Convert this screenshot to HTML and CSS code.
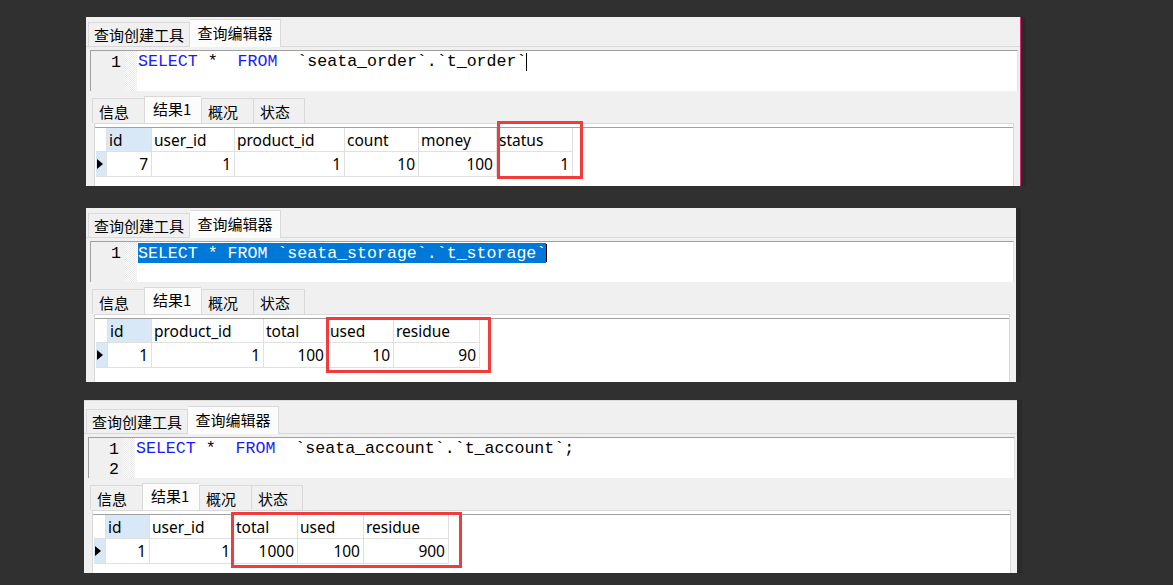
FILE: index.html
```html
<!DOCTYPE html>
<html lang="zh-CN">
<head>
<meta charset="utf-8">
<title>Seata 查询结果</title>
<link rel="stylesheet" href="styles.css">
</head>
<body>
<main class="page">

  <section class="panel p1">
    <div class="tabbar">
      <div class="tab">查询创建工具</div>
      <div class="tab active">查询编辑器</div>
    </div>
    <div class="editor">
      <div class="gutter"><div class="ln">1</div></div>
      <div class="dots"></div>
      <div class="code">
        <div class="line"><span class="kw">SELECT</span> *  <span class="kw">FROM</span>  `seata_order`.`t_order`<span class="caret"></span></div>
      </div>
    </div>
    <div class="rtabs">
      <div class="rtab">信息</div>
      <div class="rtab active">结果1</div>
      <div class="rtab">概况</div>
      <div class="rtab">状态</div>
    </div>
    <div class="frame">
      <div class="grid g1">
        <div class="c ind"></div><div class="c h sel">id</div><div class="c h">user_id</div><div class="c h">product_id</div><div class="c h">count</div><div class="c h">money</div><div class="c h">status</div>
        <div class="c ind cur"><span class="tri"></span></div><div class="c d">7</div><div class="c d">1</div><div class="c d">1</div><div class="c d">10</div><div class="c d">100</div><div class="c d">1</div>
      </div>
    </div>
    <div class="mark m1"></div>
  </section>

  <section class="panel p2">
    <div class="tabbar">
      <div class="tab">查询创建工具</div>
      <div class="tab active">查询编辑器</div>
    </div>
    <div class="editor">
      <div class="gutter"><div class="ln">1</div></div>
      <div class="dots"></div>
      <div class="code">
        <div class="line"><span class="selected">SELECT * FROM `seata_storage`.`t_storage`</span><span class="caret"></span></div>
      </div>
    </div>
    <div class="rtabs">
      <div class="rtab">信息</div>
      <div class="rtab active">结果1</div>
      <div class="rtab">概况</div>
      <div class="rtab">状态</div>
    </div>
    <div class="frame">
      <div class="grid g2">
        <div class="c ind"></div><div class="c h sel">id</div><div class="c h">product_id</div><div class="c h">total</div><div class="c h">used</div><div class="c h">residue</div>
        <div class="c ind cur"><span class="tri"></span></div><div class="c d">1</div><div class="c d">1</div><div class="c d">100</div><div class="c d">10</div><div class="c d">90</div>
      </div>
    </div>
    <div class="mark m2"></div>
  </section>

  <section class="panel p3">
    <div class="tabbar">
      <div class="tab">查询创建工具</div>
      <div class="tab active">查询编辑器</div>
    </div>
    <div class="editor">
      <div class="gutter"><div class="ln">1</div><div class="ln">2</div></div>
      <div class="dots"></div>
      <div class="code">
        <div class="line"><span class="kw">SELECT</span> *  <span class="kw">FROM</span>  `seata_account`.`t_account`;</div>
        <div class="line"></div>
      </div>
    </div>
    <div class="rtabs">
      <div class="rtab">信息</div>
      <div class="rtab active">结果1</div>
      <div class="rtab">概况</div>
      <div class="rtab">状态</div>
    </div>
    <div class="frame">
      <div class="grid g3">
        <div class="c ind"></div><div class="c h sel">id</div><div class="c h">user_id</div><div class="c h">total</div><div class="c h">used</div><div class="c h">residue</div>
        <div class="c ind cur"><span class="tri"></span></div><div class="c d">1</div><div class="c d">1</div><div class="c d">1000</div><div class="c d">100</div><div class="c d">900</div>
      </div>
    </div>
    <div class="mark m3"></div>
  </section>

</main>
</body>
</html>
```
FILE: styles.css
```css
* { box-sizing: border-box; }

html, body {
  margin: 0;
  padding: 0;
}

body {
  width: 1173px;
  height: 585px;
  overflow: hidden;
  background: #303030;
  font-family: "Noto Sans CJK SC", "Noto Sans", sans-serif;
  color: #000;
}

.page {
  display: flex;
  flex-direction: column;
  align-items: flex-start;
  padding-top: 17px;
}

.panel {
  position: relative;
  display: flex;
  flex-direction: column;
  background: #f0f0f0;
  overflow: hidden;
  box-shadow: 5px 0 0 #2a2a2a;
}

.p1 {
  margin-left: 86px;
  width: 935px;
  height: 169px;
  border-right: 1px solid #e02a72;
}

.p2 {
  margin-top: 22px;
  margin-left: 86px;
  width: 930px;
  height: 174px;
}

.p3 {
  margin-top: 18px;
  margin-left: 84px;
  width: 933px;
  height: 173px;
  padding-top: 3px;
  border-top: 1px solid #dcdcdc;
}

/* top tabs */
.tabbar {
  display: flex;
  align-items: flex-end;
  height: 30px;
  padding-left: 2px;
  border-bottom: 1px solid #d9d9d9;
  flex-shrink: 0;
}

.tab {
  height: 24px;
  padding: 0 5px;
  font-size: 15px;
  line-height: 24px;
  border: 1px solid #d9d9d9;
  border-bottom: none;
  background: #f0f0f0;
  white-space: nowrap;
}

.tab.active {
  height: 28px;
  width: 91px;
  margin-bottom: -1px;
  line-height: 26px;
  text-align: center;
  padding: 0;
  background: #fcfcfc;
  border-left: none;
}

/* editor */
.editor {
  display: flex;
  height: 41px;
  margin: 3px 2px 0 4px;
  background: #fff;
  border-top: 1px solid #a0a0a0;
  border-left: 1px solid #a0a0a0;
  border-right: 1px solid #e3e3e3;
  flex-shrink: 0;
  overflow: hidden;
}

.gutter {
  width: 34px;
  background: #f0f0f0;
  padding-right: 4px;
  padding-top: 2px;
  text-align: right;
}

.ln, .line {
  height: 20px;
  line-height: 20px;
  font-family: "Liberation Mono", monospace;
  font-size: 16.6px;
  white-space: pre;
  color: #000;
}

.dots {
  width: 12px;
  background-image: repeating-conic-gradient(#e8e8e8 0% 25%, #ffffff 0% 50%);
  background-size: 2px 2px;
}

.code {
  flex: 1;
  padding-left: 1px;
  padding-top: 1px;
}

.kw { color: #1a1aff; }

.selected {
  background: #0078d7;
  color: #fff;
  display: inline-block;
  height: 20px;
  line-height: 22px;
}

.caret {
  display: inline-block;
  width: 1px;
  height: 18px;
  background: #000;
  vertical-align: top;
  margin-top: 1px;
}

/* result tabs */
.rtabs {
  display: flex;
  align-items: flex-end;
  height: 32px;
  padding-left: 6px;
  flex-shrink: 0;
}

.rtab {
  width: 52px;
  height: 25px;
  padding-left: 6px;
  font-size: 15px;
  line-height: 26px;
  border: 1px solid #d9d9d9;
  border-bottom: none;
  border-right: none;
  background: #f0f0f0;
  white-space: nowrap;
}

.rtab:last-child { border-right: 1px solid #d9d9d9; }

.rtab.active {
  width: 57px;
  height: 27px;
  padding-left: 8px;
  line-height: 24px;
  background: #fcfcfc;
}

/* grid */
.frame {
  flex: 1;
  margin: 0 6px 0 8px;
  padding: 3px 0 0 1px;
  background: #fff;
  border: 1px solid #d9d9d9;
  border-bottom: none;
}

.grid {
  display: grid;
  border-top: 1px solid #a0a0a0;
  margin-left: -1px;
  padding-left: 1px;
  font-family: "Noto Sans", "Noto Sans CJK SC", sans-serif;
  font-size: 15.5px;
}

.g1 { grid-template-columns: 11px 45px 83px 110px 74px 78px 76px; grid-template-rows: 24px 25px; }
.g2 { grid-template-columns: 12px 44px 112px 64px 66px 86px; grid-template-rows: 24px 25px; }
.g3 { grid-template-columns: 12px 44px 84px 64px 66px 85px; grid-template-rows: 24px 25px; }

.c {
  border-right: 1px solid #e0e0e0;
  border-bottom: 1px solid #e0e0e0;
  white-space: nowrap;
  overflow: hidden;
}

.h {
  padding-left: 2px;
  line-height: 24px;
}

.h.sel { background: #d9e8f6; }

.d {
  text-align: right;
  padding-right: 3px;
  line-height: 25px;
}

.ind.cur {
  background: #d9e8f6;
  display: flex;
  align-items: center;
  padding-left: 1px;
}

.tri {
  width: 0;
  height: 0;
  border-left: 6px solid #000;
  border-top: 5px solid transparent;
  border-bottom: 5px solid transparent;
}

/* red highlight annotations */
.mark {
  position: absolute;
  border: 3px solid #f03c3c;
}

.m1 { left: 411px; top: 104px; width: 86px; height: 58px; }
.m2 { left: 240px; top: 109px; width: 165px; height: 56px; }
.m3 { left: 147px; top: 111px; width: 231px; height: 56px; }
```
